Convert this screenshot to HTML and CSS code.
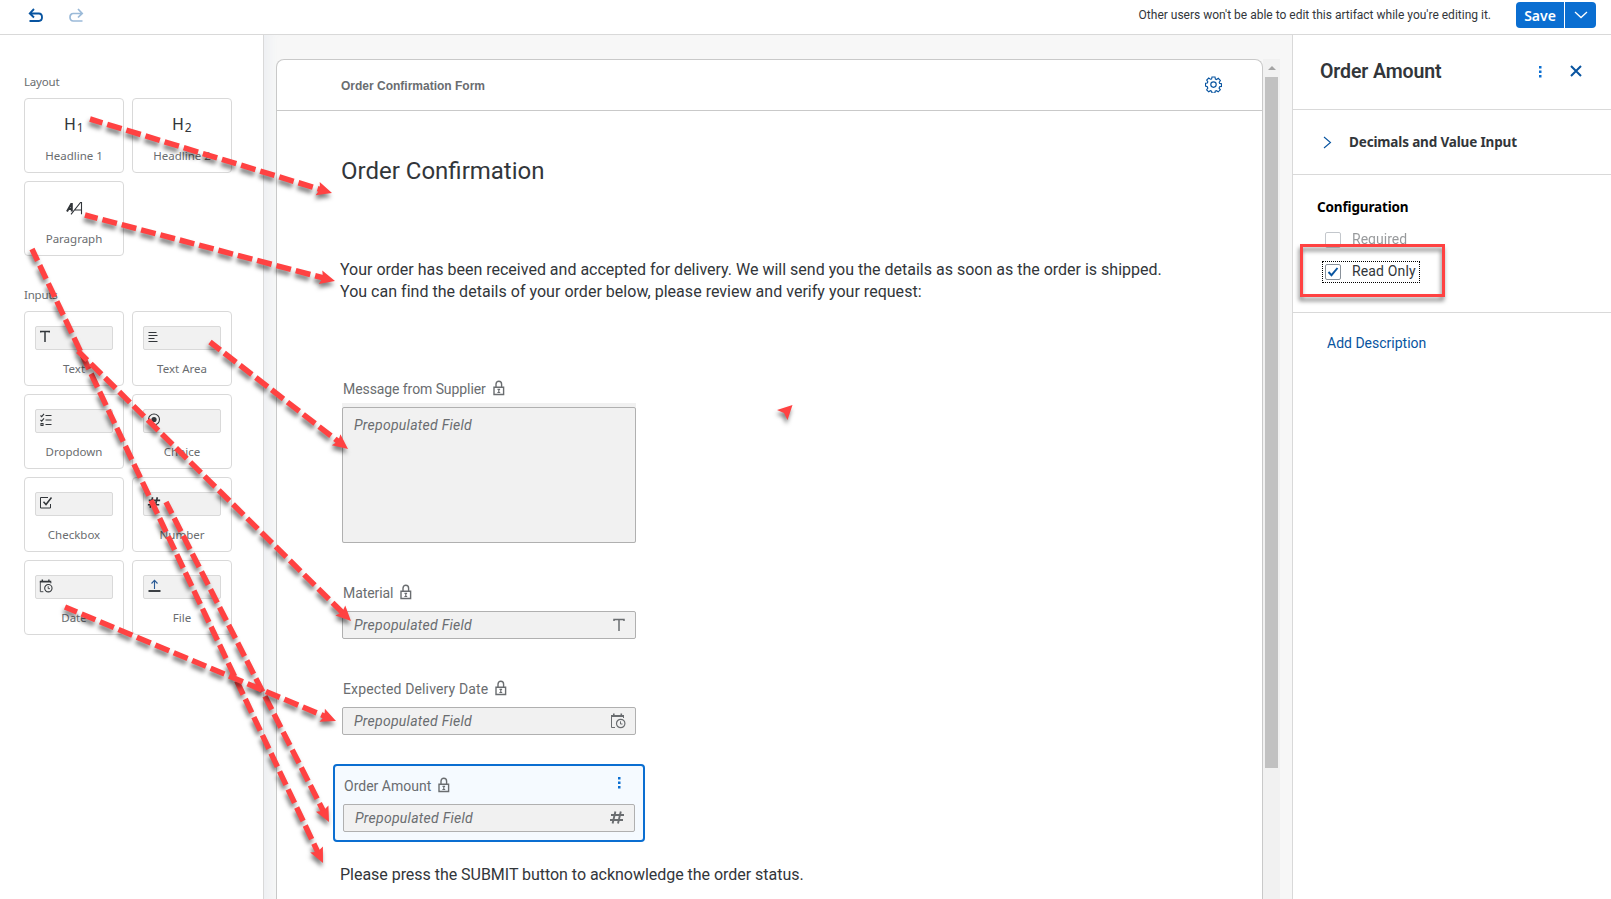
FILE: index.html
```html
<!DOCTYPE html>
<html lang="en">
<head>
<meta charset="utf-8">
<title>Order Confirmation Form</title>
<link rel="stylesheet" href="styles.css">
</head>
<body>
<svg class="defs" width="0" height="0">
  <defs>
    <symbol id="lock" viewBox="0 0 12 16"><path d="M1 7.2h9.6v7.3H1zM3 7V4.2C3 2.400 4.200 1.300 5.800 1.300S8.600 2.400 8.600 4.200V7" fill="none" stroke="currentColor" stroke-width="1.400"/><path d="M4.500 9.300h2.600M5.800 9v3.500M4.400 12.500h2.800" stroke="currentColor" stroke-width="1.200" fill="none"/></symbol>
    <symbol id="calendar" viewBox="0 0 16 16"><path d="M5 14.500H1.500V2.500M13.500 3.500v1.500" fill="none" stroke="currentColor" stroke-width="1"/><path d="M1 2h13v2H1zM3 .600h1.600V2H3zM10.500 .600h1.600V2h-1.600z" fill="currentColor"/><circle cx="10.700" cy="10.500" r="4.200" fill="none" stroke="currentColor" stroke-width="1.200"/><path d="M10.500 8.300v2.700h2" fill="none" stroke="currentColor" stroke-width="1"/></symbol>
    <symbol id="hash" viewBox="0 0 16 16"><path d="M6.400 1.500 3.600 13.500M11.800 1.500 9 13.500M2 5h13M1 10h13" fill="none" stroke="currentColor" stroke-width="1.900"/></symbol>
    <symbol id="letter-t" viewBox="0 0 12 14"><path d="M1 3V1.500h10V3M6 1.500V13" fill="none" stroke="currentColor" stroke-width="1.500"/></symbol>
  </defs>
</svg>

<header class="topbar">
  <div class="history">
    <svg width="16" height="16" viewBox="0 0 16 16" class="undo"><path d="M1.500 14h9.300c2 0 3.200-1.600 3.200-3.700S12.800 6.500 10.800 6.500H2M6 2 1.800 6.400 6 10.500" fill="none" stroke="currentColor" stroke-width="1.900"/></svg>
    <svg width="16" height="16" viewBox="0 0 16 16" class="redo"><path d="M14.500 14H5.200C3.200 14 2 12.400 2 10.300S3.200 6.500 5.200 6.500H14M10 2l4.200 4.400L10 10.500" fill="none" stroke="currentColor" stroke-width="1.700"/></svg>
  </div>
  <span class="lock-note">Other users won't be able to edit this artifact while you're editing it.</span>
  <div class="split-button">
    <button class="save">Save</button>
    <button class="save-menu"><svg width="14" height="8" viewBox="0 0 14 8"><path d="M1 1l6 5.500L13 1" fill="none" stroke="#fff" stroke-width="1.300"/></svg></button>
  </div>
</header>

<div class="workspace">
  <aside class="palette">
    <h3 class="group">Layout</h3>
    <div class="tiles">
      <div class="tile"><div class="glyph">H<sub>1</sub></div><span>Headline 1</span></div>
      <div class="tile"><div class="glyph">H<sub>2</sub></div><span>Headline 2</span></div>
      <div class="tile"><div class="glyph"><svg width="18" height="14" viewBox="0 0 18 14"><path d="M2 10.500 6.200 3h.600v7.500M3.500 8h3.500" fill="none" stroke="currentColor" stroke-width="2"/><path d="M6 13.300 15.500 1.500h1v11.800M10 9h6.500" fill="none" stroke="currentColor" stroke-width="1.100"/></svg></div><span>Paragraph</span></div>
    </div>
    <h3 class="group inputs">Inputs</h3>
    <div class="tiles">
      <div class="tile"><div class="mini"><svg class="mi-t" width="10" height="13" viewBox="0 0 10 13"><path d="M.700 2.500V1.500h8.600v1M5 1.500V12" fill="none" stroke="currentColor" stroke-width="1.500"/></svg></div><span>Text</span></div>
      <div class="tile"><div class="mini"><svg width="13" height="14" viewBox="0 0 13 14"><path d="M.500 2.500h8M.500 5.500h9M.500 8.500h6M.500 11.500h9" stroke="currentColor" stroke-width="1.200"/></svg></div><span>Text Area</span></div>
      <div class="tile"><div class="mini"><svg width="13" height="14" viewBox="0 0 13 14"><path d="M.500 2.500l1.200 1.200L4 .800M.500 7l1.200 1.200L4 5.300M1 10.500h2v2H1zM5.500 2.500h6M5.500 7h6M5.500 11.500h6" fill="none" stroke="currentColor" stroke-width="1.100"/></svg></div><span>Dropdown</span></div>
      <div class="tile"><div class="mini"><svg width="14" height="14" viewBox="0 0 14 14"><circle cx="6" cy="6.500" r="5.500" fill="none" stroke="currentColor" stroke-width="1.100"/><circle cx="6" cy="6.500" r="2.600" fill="currentColor"/></svg></div><span>Choice</span></div>
      <div class="tile"><div class="mini"><svg width="14" height="14" viewBox="0 0 14 14"><path d="M8 1.500H.500v10.500H10.500V8" fill="none" stroke="currentColor"/><path d="M3.500 5.800l2.500 2.700 5.500-7" fill="none" stroke="currentColor" stroke-width="1.500"/></svg></div><span>Checkbox</span></div>
      <div class="tile"><div class="mini"><svg class="mi-c" width="14" height="14"><use href="#hash"/></svg></div><span>Number</span></div>
      <div class="tile"><div class="mini"><svg class="mi-c" width="14" height="14"><use href="#calendar"/></svg></div><span>Date</span></div>
      <div class="tile"><div class="mini"><svg width="14" height="14" viewBox="0 0 14 14"><path d="M6.500 10V1.500M3.500 4.500l3-3.200 3 3.200" fill="none" stroke="#2a5b96" stroke-width="1.100"/><path d="M.500 12h12" stroke="currentColor" stroke-width="1.900"/></svg></div><span>File</span></div>
    </div>
  </aside>

  <main class="canvas">
    <section class="form-card">
      <div class="form-head">
        <span>Order Confirmation Form</span>
        <svg width="17" height="17" viewBox="0 0 17 17"><path d="M7 1h3l.4 2 1.200.500 1.700-1.200 2.100 2.200-1.200 1.700.500 1.200 1.800.300v2.700l-1.900.400-.500 1.300 1.200 1.700-2.100 2-1.700-1.100-1.300.500-.300 1.900H7l-.400-1.900-1.200-.500-1.700 1.100-2-2 1.100-1.700-.500-1.300L.500 10V7.300L2.300 7l.500-1.200-1.100-1.700 2-2.100 1.700 1.200L6.600 3z" fill="none" stroke="currentColor" stroke-width="1.150"/><circle cx="8.500" cy="8.600" r="2.700" fill="none" stroke="currentColor" stroke-width="1.150"/></svg>
      </div>
      <div class="form-body">
        <h1>Order Confirmation</h1>
        <p class="intro"><span>Your order has been received and accepted for delivery. We will send you the details as soon as the order is shipped.</span><br><span class="line-two">You can find the details of your order below, please review and verify your request:</span></p>
        <div class="field">
          <label><span class="label-tight">Message from Supplier</span><svg width="12" height="16"><use href="#lock"/></svg></label>
          <div class="area-strip"><div class="area"><span class="placeholder">Prepopulated Field</span></div></div>
        </div>
        <div class="field">
          <label><span class="label-tight">Material</span><svg width="12" height="16"><use href="#lock"/></svg></label>
          <div class="input"><span class="placeholder">Prepopulated Field</span><svg class="in-t" width="12" height="14"><use href="#letter-t"/></svg></div>
        </div>
        <div class="field">
          <label><span class="label-wide">Expected Delivery Date</span><svg width="12" height="16"><use href="#lock"/></svg></label>
          <div class="input"><span class="placeholder">Prepopulated Field</span><svg width="16" height="16"><use href="#calendar"/></svg></div>
        </div>
        <div class="field selected">
          <label><span>Order Amount</span><svg width="12" height="16"><use href="#lock"/></svg><svg class="more" width="3" height="13" viewBox="0 0 3 13"><path d="M0 1h2.500v2.500H0zM0 5.500h2.500V8H0zM0 10h2.500v2.500H0z" fill="#0a6ed1"/></svg></label>
          <div class="input"><span class="placeholder">Prepopulated Field</span><svg width="16" height="16"><use href="#hash"/></svg></div>
        </div>
        <p class="outro">Please press the SUBMIT button to acknowledge the order status.</p>
      </div>
    </section>
    <div class="scrollbar"><i class="up"></i><i class="thumb"></i></div>
  </main>

  <aside class="inspector">
    <div class="ins-head"><h2>Order Amount</h2>
      <svg class="ins-more" width="3" height="13" viewBox="0 0 3 13"><path d="M0 1h2.500v2.500H0zM0 5.500h2.500V8H0zM0 10h2.500v2.500H0z" fill="#0a6ed1"/></svg>
      <svg class="close" width="12" height="12" viewBox="0 0 12 12"><path d="M1 1l10 10M11 1 1 11" stroke="#0854a0" stroke-width="2"/></svg>
    </div>
    <div class="ins-row"><svg width="9" height="13" viewBox="0 0 9 13"><path d="M1 1l6.500 5.500L1 12" fill="none" stroke="#0854a0" stroke-width="1.100"/></svg><span class="strong">Decimals and Value Input</span></div>
    <div class="ins-config">
      <h4 class="strong">Configuration</h4>
      <div class="check off"><i class="box"></i><span>Required</span></div>
      <div class="check focus"><i class="box"><svg width="12" height="12" viewBox="0 0 12 12"><path d="M1.500 6l3 3.200L10.500 2" fill="none" stroke="#0854a0" stroke-width="1.900"/></svg></i><span class="label-wide">Read Only</span></div>
    </div>
    <a class="add">Add Description</a>
  </aside>
</div>

<svg class="annotations" width="1611" height="899" viewBox="0 0 1611 899">
  <g id="arrows"></g>
  <path class="shade" d="M777 410 792.500 405 787.500 420 784 413Z" fill="#ff4242"/>
  <rect class="shade" x="1301.500" y="245.500" width="142" height="50" fill="none" stroke="#ff4242" stroke-width="3"/>
</svg>
<script src="arrows.js"></script>
</body>
</html>
```
FILE: arrows.js
```js
// Dashed callout arrows from palette tiles to form elements: [x1, y1, x2, y2]
const arrows = [
  [90, 119, 332, 193],
  [85, 215, 335, 281],
  [32, 249, 323, 863],
  [210, 342, 348, 449],
  [78, 351, 351, 621],
  [166, 502, 329, 822],
  [65, 607, 336, 721]
];
document.getElementById('arrows').innerHTML = arrows.map(([x1, y1, x2, y2]) => {
  const len = Math.hypot(x2 - x1, y2 - y1);
  const deg = Math.atan2(y2 - y1, x2 - x1) * 180 / Math.PI;
  return `<g class="shade"><g transform="translate(${x1} ${y1}) rotate(${deg})">
    <path d="M0 0H${len - 11}" stroke="#ff4242" stroke-width="5.500" stroke-dasharray="15 5" stroke-dashoffset="2"/>
    <path transform="translate(${len} 0)" d="M0 0-15-7-12.500 0-15 7Z" fill="#ff4242"/></g></g>`;
}).join('');
```
FILE: styles.css
```css
* { box-sizing: border-box; }
body { margin: 0; width: 1611px; height: 899px; overflow: hidden; position: relative; display: flex; flex-direction: column; background: #fff; color: #32363a; font-family: Roboto, "Noto Sans", sans-serif; font-size: 14px; }
h1, h2, h3, h4, p { margin: 0; font-weight: 400; }
svg { display: block; flex: none; }
.defs { position: absolute; }
span { white-space: nowrap; }

.topbar { height: 35px; flex: none; display: flex; align-items: flex-start; border-bottom: 1px solid #d9d9d9; padding: 2px 15px 0 28px; }
.history { display: flex; gap: 24px; padding-top: 5px; color: #0854a0; flex: 1; }
.redo { opacity: .4; }
.lock-note { font-size: 12px; line-height: 26px; margin-right: 25px; }
.split-button { display: flex; gap: 1px; height: 26px; }
.split-button button { border: 0; background: #0a6ed1; color: #fff; padding: 0; display: flex; align-items: center; justify-content: center; font-family: "Noto Sans", sans-serif; }
.save { width: 48px; border-radius: 4px 0 0 4px; font-size: 14px; font-weight: 600; }
.save-menu { width: 31px; border-radius: 0 4px 4px 0; }

.workspace { flex: 1; display: flex; min-height: 0; }
.palette { width: 264px; padding: 37px 0 0 24px; border-right: 1px solid #d9d9d9; color: #6a6d70; font-family: "Noto Sans", sans-serif; }
.group { font-size: 11.500px; line-height: 20px; margin-bottom: 6px; letter-spacing: -.2px; }
.inputs { margin-top: 29px; }
.tiles { display: grid; grid-template-columns: 100px 100px; gap: 8px; }
.tile { height: 75px; border: 1px solid #d9d9d9; border-radius: 4px; display: flex; flex-direction: column; align-items: center; font-size: 11.500px; line-height: 18px; }
.glyph { height: 48px; display: flex; align-items: center; font: 16px/18px Roboto, sans-serif; color: #32363a; padding-top: 3px; }
.glyph sub { font: 12px/12px "Noto Sans", sans-serif; margin: 6px 0 0 1px; vertical-align: baseline; }
.mini { width: 78px; height: 24px; margin: 14px 0 10px; background: #f1f1f1; border: 1px solid #d9d9d9; border-radius: 2px; padding: 3px 0 0 4px; color: #32363a; }
.mi-c { margin-left: -1px; }

.canvas { width: 1028px; background: #f7f7f7; padding: 24px 0 0 12px; display: flex; box-shadow: inset 12px 0 10px -6px #eef0f3; }
.form-card { width: 987px; border: 1px solid #c9c9c9; border-bottom: 0; border-radius: 8px 8px 0 0; background: #fff; overflow: hidden; }
.form-head { height: 51px; border-bottom: 1px solid #c9c9c9; display: flex; align-items: center; justify-content: space-between; padding: 0 40px 0 64px; color: #6a6d70; font: 700 12px "Liberation Sans", sans-serif; }
.form-head svg { color: #0854a0; margin-bottom: 1px; }
.form-head span { margin-top: 1px; }
.form-body { padding: 45px 0 0 63px; }
h1 { font-size: 24px; line-height: 30px; padding-left: 1px; }
.intro { margin-top: 73px; font-size: 16px; line-height: 22px; margin-bottom: 76px; }
.line-two { letter-spacing: .025px; }
.field { width: 294px; margin: 0 0 40px 2px; }
label { display: flex; height: 20px; line-height: 20px; color: #6a6d70; margin-bottom: 8px; gap: 7px; padding-left: 1px; }
.label-tight { letter-spacing: -.080px; }
.label-wide { letter-spacing: .140px; }
label svg { margin-top: 1px; }
.input { height: 28px; border: 1px solid #b0b0b0; border-radius: 2px; background: #f1f1f1; display: flex; align-items: center; justify-content: space-between; padding: 0 9px 0 11px; color: #6a6d70; }
.in-t { margin-right: 1px; }
.area-strip { background: #f1f1f1; padding-top: 4px; margin-top: -4px; }
.area { height: 136px; border: 1px solid #b0b0b0; border-radius: 2px; padding: 7px 11px; line-height: 20px; color: #6a6d70; }
.placeholder { font-style: italic; letter-spacing: .270px; }
.selected { width: 312px; height: 78px; margin: -11px 0 22px -7px; border: 2px solid #0a6ed1; border-radius: 4px; background: #f5faff; padding: 10px 8px 8px; }
label .more { margin: 0 14px 0 auto; }
.outro { font-size: 16px; line-height: 22px; letter-spacing: -.030px; }
.scrollbar { width: 17px; background: #f1f1f1; display: flex; flex-direction: column; align-items: center; }
.up { border: 4px solid transparent; border-top: 0; border-bottom: 4px solid #a3a3a3; margin: 7px 0 7px; }
.thumb { width: 13px; height: 691px; background: #c1c1c1; }

.inspector { flex: 1; border-left: 1px solid #d9d9d9; }
.ins-head { height: 75px; border-bottom: 1px solid #d9d9d9; display: flex; align-items: center; padding: 0 29px 2px 27px; }
.ins-head h2 { font-size: 19.500px; font-weight: 600; letter-spacing: -.100px; flex: 1; }
.ins-more { margin-top: 1px; }
.close { margin-left: 28px; }
.ins-row { height: 65px; border-bottom: 1px solid #d9d9d9; display: flex; align-items: center; padding-left: 30px; gap: 17px; }
.strong { font-family: "Noto Sans", sans-serif; font-size: 13.500px; font-weight: 700; letter-spacing: -.150px; }
.ins-config { height: 138px; border-bottom: 1px solid #d9d9d9; padding: 22px 0 0 24px; }
.ins-config h4 { line-height: 20px; color: #000; margin-bottom: 12px; }
.check { height: 22px; width: 98px; margin-left: 5px; display: flex; align-items: center; gap: 11px; padding-left: 3px; margin-bottom: 10px; }
.check span { margin-top: -2px; }
.off { opacity: .5; }
.focus { outline: 1px dotted #000; outline-offset: -1px; }
.box { width: 16px; height: 16px; border: 1px solid #89919a; border-radius: 2px; padding: 1px; flex: none; }
.add { display: block; padding: 20px 0 0 34px; line-height: 20px; color: #0854a0; }

.annotations { position: absolute; left: 0; top: 0; }
.shade { filter: drop-shadow(-1px 4px 2px rgba(0, 0, 0, .5)); }
```
